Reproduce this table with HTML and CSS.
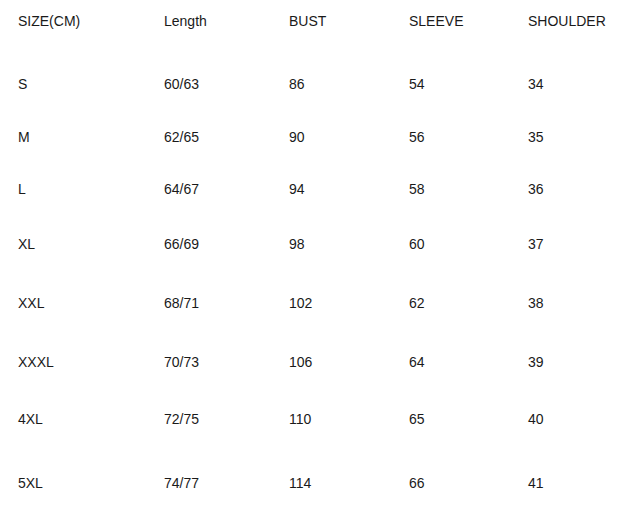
FILE: index.html
```html
<!DOCTYPE html>
<html>
<head>
<meta charset="utf-8">
<link rel="stylesheet" href="styles.css">
</head>
<body>
<div class="chart">
  <div class="row r0"><span>SIZE(CM)</span><span>Length</span><span>BUST</span><span>SLEEVE</span><span>SHOULDER</span></div>
  <div class="row r1"><span>S</span><span>60/63</span><span>86</span><span>54</span><span>34</span></div>
  <div class="row r2"><span>M</span><span>62/65</span><span>90</span><span>56</span><span>35</span></div>
  <div class="row r3"><span>L</span><span>64/67</span><span>94</span><span>58</span><span>36</span></div>
  <div class="row r4"><span>XL</span><span>66/69</span><span>98</span><span>60</span><span>37</span></div>
  <div class="row r5"><span>XXL</span><span>68/71</span><span>102</span><span>62</span><span>38</span></div>
  <div class="row r6"><span>XXXL</span><span>70/73</span><span>106</span><span>64</span><span>39</span></div>
  <div class="row r7"><span>4XL</span><span>72/75</span><span>110</span><span>65</span><span>40</span></div>
  <div class="row r8"><span>5XL</span><span>74/77</span><span>114</span><span>66</span><span>41</span></div>
</div>
</body>
</html>
```
FILE: styles.css
```css
html, body {
  margin: 0;
  background: #fff;
}
.chart {
  padding: 13px 0 0 18px;
  font-family: "Liberation Sans", Arial, sans-serif;
  font-size: 14px;
  line-height: 16px;
  color: #1a1a1a;
}
.row {
  display: grid;
  grid-template-columns: 146px 125px 120px 119px auto;
}
.r1 { margin-top: 47px; }
.r2 { margin-top: 37px; }
.r3 { margin-top: 36px; }
.r4 { margin-top: 39px; }
.r5 { margin-top: 43px; }
.r6 { margin-top: 43px; }
.r7 { margin-top: 41px; }
.r8 { margin-top: 48px; }
```
